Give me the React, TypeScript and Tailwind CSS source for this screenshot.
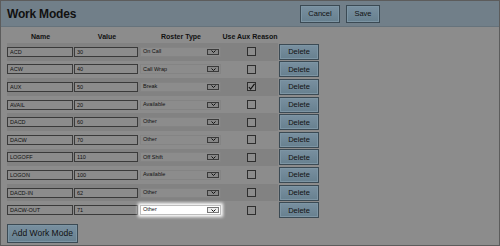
import React from 'react';

type WorkMode = {
    name: string;
    value: string;
    roster: string;
    aux: boolean;
};

const modes: WorkMode[] = [
    { name: 'ACD', value: '30', roster: 'On Call', aux: false },
    { name: 'ACW', value: '40', roster: 'Call Wrap', aux: false },
    { name: 'AUX', value: '50', roster: 'Break', aux: true },
    { name: 'AVAIL', value: '20', roster: 'Available', aux: false },
    { name: 'DACD', value: '60', roster: 'Other', aux: false },
    { name: 'DACW', value: '70', roster: 'Other', aux: false },
    { name: 'LOGOFF', value: '110', roster: 'Off Shift', aux: false },
    { name: 'LOGON', value: '100', roster: 'Available', aux: false },
    { name: 'DACD-IN', value: '62', roster: 'Other', aux: false },
    { name: 'DACW-OUT', value: '71', roster: 'Other', aux: false },
];

const btn =
    'border border-[#3b4a54] bg-gradient-to-b from-[#7990a0] to-[#67808f] text-[#111] shadow-[inset_0_0_0_1px_#7d95a4]';

const RosterSelect = ({ label, active }: { label: string; active: boolean }) => (
    <div
        className={
            'relative flex items-center w-[81px] h-[10px] border ' +
            (active
                ? 'bg-white border-[#bdbdbd] shadow-[0_0_3px_2px_#ffffff]'
                : 'bg-[#8c8c8c] border-[#848484]')
        }
    >
        <span className="pl-[2px] text-[5.5px] leading-none text-[#111]">{label}</span>
        <span
            className={
                'absolute right-[1px] top-[1px] bottom-[1px] w-[12px] flex items-center justify-center border ' +
                (active ? 'border-[#777] bg-[#ececec]' : 'border-[#3a3a3a] bg-[#868686]')
            }
        >
            <svg width="5" height="3" viewBox="0 0 5 3">
                <path d="M0.5 0.5 L2.5 2.5 L4.5 0.5" fill="none" stroke="#111" strokeWidth="1" />
            </svg>
        </span>
    </div>
);

const App = () => {
    return (
        <div
            className="w-[500px] h-[246px] overflow-hidden border border-[#5c5c5c] bg-[#8c8c8c] text-[#111]"
            style={{ fontFamily: '"Liberation Sans", Arial, sans-serif' }}
        >
            {/* header bar */}
            <div className="h-[26px] flex items-center pl-[6px] bg-[#717f89] border-b border-[#66737c]">
                <h1 className="flex-1 text-[12px] font-bold tracking-[-0.2px]">Work Modes</h1>
                <div className="flex gap-[6px] mr-[119px]">
                    <button className={btn + ' w-[40px] h-[18px] text-[7.5px]'}>Cancel</button>
                    <button className={btn + ' w-[34px] h-[18px] text-[7.5px]'}>Save</button>
                </div>
            </div>

            <div className="pl-[6px] pt-[4px]">
                {/* column headings */}
                <div className="flex h-[12px] items-center text-[7px] font-bold">
                    <span className="w-[67px] text-center">Name</span>
                    <span className="w-[66px] text-center">Value</span>
                    <span className="w-[82px] text-center">Roster Type</span>
                    <span className="w-[56px] text-center">Use Aux Reason</span>
                </div>

                {modes.map((m, i) => (
                    <div key={m.name} className="flex h-[17.6px] items-center">
                        <div
                            className={
                                'flex items-center h-full w-[271px] ' +
                                (i % 2 === 0 ? 'bg-[#828282]' : 'bg-[#8c8c8c]')
                            }
                        >
                            <input
                                readOnly
                                value={m.name}
                                className="w-[66px] h-[10px] border border-[#3a3a3a] bg-[#8c8c8c] pl-[2px] text-[5.5px] leading-none outline-none"
                            />
                            <input
                                readOnly
                                value={m.value}
                                className="ml-[1px] w-[64px] h-[10px] border border-[#3a3a3a] bg-[#8c8c8c] pl-[2px] text-[5.5px] leading-none outline-none"
                            />
                            <div className="ml-[2px]">
                                <RosterSelect label={m.roster} active={i === modes.length - 1} />
                            </div>
                            <div className="flex-1 flex justify-center pl-[4px]">
                                <span className="w-[9px] h-[9px] border border-[#2e2e2e] bg-[#8c8c8c] flex items-center justify-center">
                                    {m.aux && (
                                        <svg width="8" height="8" viewBox="0 0 8 8">
                                            <path d="M1 4 L3 6.5 L7.5 0.5" fill="none" stroke="#111" strokeWidth="1.3" />
                                        </svg>
                                    )}
                                </span>
                            </div>
                        </div>
                        <button className={btn + ' ml-[1px] w-[40px] h-[16px] text-[7.5px]'}>Delete</button>
                    </div>
                ))}

                <button className={btn + ' mt-[2px] w-[71px] h-[19px] text-[8.5px]'}>Add Work Mode</button>
            </div>
        </div>
    );
};

export default App;
